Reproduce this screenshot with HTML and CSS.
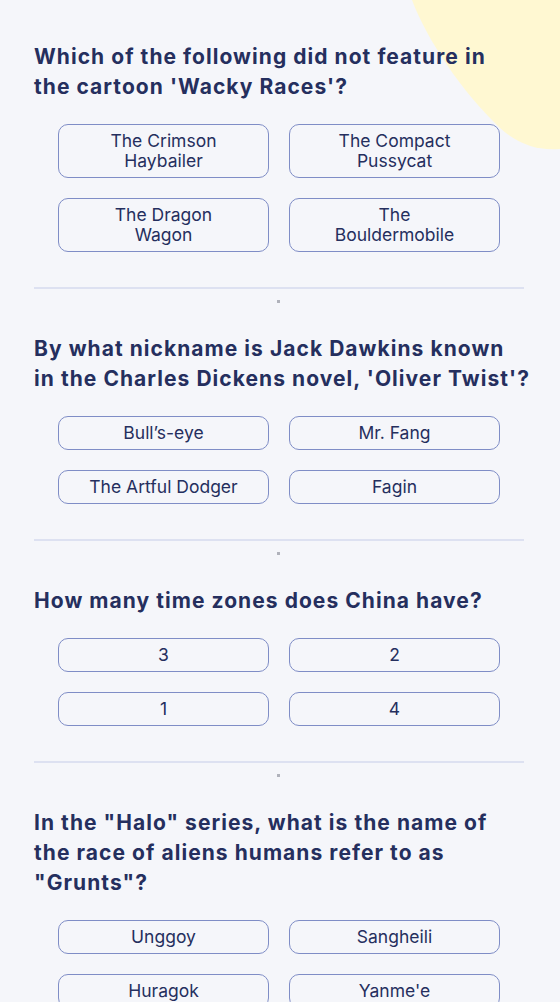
FILE: index.html
```html
<!DOCTYPE html>
<html lang="en">
<head>
<meta charset="utf-8">
<title>Quiz</title>
<link rel="stylesheet" href="styles.css">
</head>
<body>
<svg class="blob" width="150" height="152" viewBox="410 0 150 152" aria-hidden="true">
  <path d="M412 0 C427 40 462 92 500 128 Q526 152 560 149 L560 0 Z" fill="#fff8d2"/>
</svg>
<main class="quiz">
  <section class="question">
    <h2 class="q-title">Which of the following did not feature in<br>the cartoon 'Wacky Races'?</h2>
    <div class="answers">
      <button class="answer">The Crimson Haybailer</button>
      <button class="answer">The Compact Pussycat</button>
      <button class="answer">The Dragon Wagon</button>
      <button class="answer">The Bouldermobile</button>
    </div>
  </section>
  <div class="divider"><span class="mark"></span></div>
  <section class="question">
    <h2 class="q-title">By what nickname is Jack Dawkins known<br>in the Charles Dickens novel, 'Oliver Twist'?</h2>
    <div class="answers">
      <button class="answer">Bull’s-eye</button>
      <button class="answer">Mr. Fang</button>
      <button class="answer">The Artful Dodger</button>
      <button class="answer">Fagin</button>
    </div>
  </section>
  <div class="divider"><span class="mark"></span></div>
  <section class="question">
    <h2 class="q-title">How many time zones does China have?</h2>
    <div class="answers">
      <button class="answer">3</button>
      <button class="answer">2</button>
      <button class="answer">1</button>
      <button class="answer">4</button>
    </div>
  </section>
  <div class="divider"><span class="mark"></span></div>
  <section class="question">
    <h2 class="q-title">In the "Halo" series, what is the name of<br>the race of aliens humans refer to as<br>"Grunts"?</h2>
    <div class="answers">
      <button class="answer">Unggoy</button>
      <button class="answer">Sangheili</button>
      <button class="answer">Huragok</button>
      <button class="answer">Yanme'e</button>
    </div>
  </section>
</main>
</body>
</html>
```

FILE: styles.css
```css
html, body {
  margin: 0;
  padding: 0;
}
body {
  background: #f5f6fa;
  font-family: "Inter", "Liberation Sans", sans-serif;
  color: #252f5e;
  position: relative;
  height: 1002px;
  overflow: hidden;
}
.blob {
  position: absolute;
  top: 0;
  right: 0;
  z-index: 0;
}
.quiz {
  position: relative;
  z-index: 1;
  padding: 42px 36px 0 34px;
}
.q-title {
  margin: 0;
  font-size: 21px;
  line-height: 30px;
  font-weight: 700;
  letter-spacing: 1.05px;
  white-space: nowrap;
  color: #252f5e;
}
.answers {
  display: grid;
  grid-template-columns: 211px 211px;
  gap: 20px;
  margin: 22px 0 0 24px;
}
.answer {
  font-family: "Inter", "Liberation Sans", sans-serif;
  font-size: 17.5px;
  line-height: 20px;
  color: #252f5e;
  background: transparent;
  border: 1px solid #7f8dc6;
  border-radius: 10px;
  padding: 6px 28px;
  text-align: center;
}
.divider {
  margin: 35px 0 45px;
  height: 2px;
  background: #dde1f1;
  position: relative;
}
.mark {
  position: absolute;
  top: 13px;
  left: 243px;
  width: 3px;
  height: 3px;
  background: #b0b2bb;
}
```
